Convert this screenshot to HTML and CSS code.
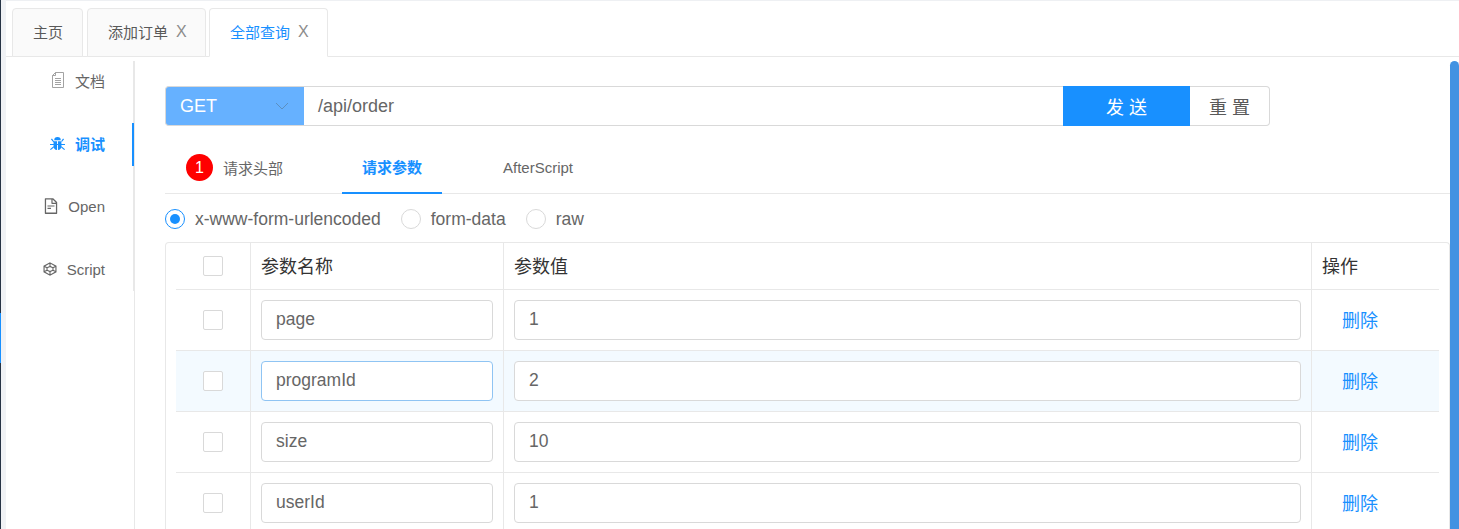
FILE: index.html
```html
<!DOCTYPE html>
<html lang="zh">
<head>
<meta charset="utf-8">
<title>全部查询</title>
<link rel="stylesheet" href="styles.css">
</head>
<body>
<div class="edge"><span class="edge-mark"></span></div>
<div class="app">
  <nav class="page-tabs">
    <div class="page-tab">主页</div>
    <div class="page-tab closable">添加订单<span class="x">X</span></div>
    <div class="page-tab closable current">全部查询<span class="x">X</span></div>
  </nav>
  <div class="workspace">
    <aside class="side">
      <div class="side-item">
        <svg class="ico ico-doc" viewBox="0 0 12 16"><path d="M3.500.5h8v15H.5V3.500zM3.500.5v3h-3M3 6.500h6M3 8.500h6M3 10.500h6M3 12.500h6" fill="none" stroke="currentColor" stroke-width=".9"/></svg>
        <span>文档</span>
      </div>
      <div class="side-item active">
        <svg class="ico ico-bug" viewBox="0 0 16 16"><path d="M4.500 4.500a3.500 3.500 0 0 1 7 0zM3.800 5.500h3.700v9.500C5 15 3.800 13 3.800 11zM8.500 5.500h3.700V11c0 2-1.200 4-3.700 4zM0 8.500h16v1.200H0zM1 3.500l1.100-.8L4.500 6 3.800 7zM15 3.500l-1.100-.8L11.500 6l.7 1zM.8 15l-.8-1L3.800 11v1.600zM15.200 15l.8-1-3.800-3v1.600z" fill="currentColor"/></svg>
        <span>调试</span>
      </div>
      <div class="side-item">
        <svg class="ico ico-file" viewBox="0 0 1024 1024"><path fill="currentColor" d="M854.6 288.6L639.4 73.4c-6-6-14.1-9.4-22.6-9.4H192c-17.7 0-32 14.3-32 32v832c0 17.7 14.3 32 32 32h640c17.7 0 32-14.3 32-32V311.3c0-8.500-3.400-16.700-9.400-22.700zM790.2 326H602V137.8L790.2 326zm1.800 562H232V136h302v216a42 42 0 0 0 42 42h216v494zM504 618H320c-4.400 0-8 3.600-8 8v48c0 4.400 3.600 8 8 8h184c4.400 0 8-3.600 8-8v-48c0-4.400-3.600-8-8-8zM312 490v48c0 4.400 3.600 8 8 8h384c4.400 0 8-3.600 8-8v-48c0-4.400-3.600-8-8-8H320c-4.400 0-8 3.600-8 8z"/></svg>
        <span>Open</span>
      </div>
      <div class="side-item">
        <svg class="ico ico-box" viewBox="0 0 16 16"><path d="M8 1l6.800 3.800v6.400L8 15l-6.800-3.800V4.800zM8 5l3.400 1.600v2.800L8 11 4.600 9.400V6.600zM8 1v4M14.800 4.800l-3.400 1.800M14.800 11.200l-3.400-1.800M8 15v-4M1.200 11.200l3.400-1.800M1.200 4.800l3.400 1.800" fill="none" stroke="currentColor" stroke-width="1.300"/></svg>
        <span>Script</span>
      </div>
    </aside>
    <main class="content">
      <div class="url-bar">
        <div class="method">GET
          <svg class="chev" viewBox="0 0 14 8"><path d="M1 1l6 6 6-6" fill="none" stroke="currentColor"/></svg>
        </div>
        <div class="url">/api/order</div>
        <div class="send">发 送</div>
        <div class="reset">重 置</div>
      </div>
      <div class="req-tabs">
        <div class="req-tab first"><span class="badge">1</span>请求头部</div>
        <div class="req-tab selected">请求参数</div>
        <div class="req-tab">AfterScript</div>
      </div>
      <div class="radios">
        <label class="radio on"><i></i>x-www-form-urlencoded</label>
        <label class="radio"><i></i>form-data</label>
        <label class="radio"><i></i>raw</label>
      </div>
      <div class="table">
        <div class="row head">
          <div class="cell check"><i class="box"></i></div>
          <div class="cell title">参数名称</div>
          <div class="cell title">参数值</div>
          <div class="cell title">操作</div>
        </div>
        <div class="row">
          <div class="cell check"><i class="box"></i></div>
          <div class="cell"><div class="field">page</div></div>
          <div class="cell"><div class="field">1</div></div>
          <div class="cell op">删除</div>
        </div>
        <div class="row hover">
          <div class="cell check"><i class="box"></i></div>
          <div class="cell"><div class="field focus">programId</div></div>
          <div class="cell"><div class="field">2</div></div>
          <div class="cell op">删除</div>
        </div>
        <div class="row">
          <div class="cell check"><i class="box"></i></div>
          <div class="cell"><div class="field">size</div></div>
          <div class="cell"><div class="field">10</div></div>
          <div class="cell op">删除</div>
        </div>
        <div class="row">
          <div class="cell check"><i class="box"></i></div>
          <div class="cell"><div class="field">userId</div></div>
          <div class="cell"><div class="field">1</div></div>
          <div class="cell op">删除</div>
        </div>
      </div>
    </main>
    <div class="scrollbar"></div>
  </div>
</div>
</body>
</html>
```
FILE: styles.css
```css
* { box-sizing: border-box; }
html, body { margin: 0; height: 100%; overflow: hidden; }
body {
  display: flex;
  background: #fff;
  color: #595959;
  font-family: "Liberation Sans", "Noto Sans CJK SC", sans-serif;
  font-size: 15px;
}
.edge {
  position: relative;
  width: 6px;
  flex: none;
  background: #f0f2f5;
  border-left: 1px solid #263445;
}
.edge-mark {
  position: absolute;
  left: -1px;
  top: 313px;
  width: 1px;
  height: 50px;
  background: #1890ff;
}
.app { flex: 1; display: flex; flex-direction: column; min-width: 0; }

.page-tabs {
  height: 57px;
  flex: none;
  display: flex;
  gap: 4px;
  padding: 7px 0 0 6px;
  border-top: 1px solid #eef0f3;
  border-bottom: 1px solid #e8e8e8;
}
.page-tab {
  height: 49px;
  padding: 0 19px 2px 20px;
  display: flex;
  align-items: center;
  border: 1px solid #e8e8e8;
  border-radius: 4px 4px 0 0;
  background: #fafafa;
  color: #595959;
}
.page-tab.closable { padding-right: 18px; }
.page-tab.current { margin-left: -1px; background: #fff; color: #1890ff; border-bottom-color: #fff; }
.x {
  width: 11px;
  margin-left: 8px;
  color: #8c8c8c;
  font-size: 16px;
}
.workspace { flex: 1; display: flex; min-height: 0; padding-top: 4px; }
.side {
  width: 129px;
  flex: none;
  height: 100%;
  border-right: 1px solid #e8e8e8;
  position: relative;
}
.side::before {
  content: "";
  position: absolute;
  right: -1px;
  top: 0;
  width: 2px;
  height: 230px;
  background: #e8e8e8;
}
.side-item {
  position: relative;
  height: 42px;
  margin-bottom: 21px;
  display: flex;
  align-items: center;
  justify-content: flex-end;
  gap: 10px;
  padding: 0 29px 2px 0;
  color: #666;
}
.side-item.active { color: #1890ff; font-weight: 700; }
.side-item.active::after {
  content: "";
  position: absolute;
  right: 0;
  top: 0;
  width: 2px;
  height: 43px;
  background: #1890ff;
}
.side-item:first-child { margin-top: -1px; }
.ico { flex: none; }
.ico-doc { width: 12px; height: 16px; margin-right: 1px; color: #999; }
.ico-bug { width: 15px; height: 15px; }
.ico-file { width: 18px; height: 18px; margin-right: -2px; }
.ico-box { width: 14px; height: 14px; }

.content { width: 1315px; flex: none; padding: 25px 0 0 30px; }
.url-bar { display: flex; width: 1105px; height: 40px; }
.method {
  width: 139px;
  display: flex;
  align-items: center;
  justify-content: space-between;
  padding: 0 15px 0 14px;
  background: #66b1ff;
  border: 1px solid #d9d9d9;
  border-right: 0;
  color: #fff;
  font-size: 18px;
  border-radius: 4px 0 0 4px;
}
.chev { width: 14px; height: 8px; color: #5b8fc0; }
.url {
  flex: 1;
  display: flex;
  align-items: center;
  padding: 0 14px;
  border: 1px solid #d9d9d9;
  border-left: 0;
  border-right: 0;
  font-size: 18px;
  color: #666;
}
.send, .reset { display: flex; align-items: center; justify-content: center; font-size: 18px; }
.send { width: 127px; background: #1890ff; color: #fff; }
.reset {
  width: 80px;
  border: 1px solid #d9d9d9;
  border-left: 0;
  border-radius: 0 4px 4px 0;
  color: #595959;
}

.req-tabs {
  height: 48px;
  margin-top: 20px;
  display: flex;
  border-bottom: 1px solid #e8e8e8;
}
.req-tab {
  width: 100px;
  margin-right: 46px;
  padding-bottom: 5px;
  display: flex;
  align-items: center;
  justify-content: center;
  color: #666;
  margin-bottom: -1px;
}
.req-tab.first { width: 157px; margin-right: 20px; justify-content: flex-start; padding-left: 21px; }
.req-tab.selected { color: #1890ff; font-weight: 700; border-bottom: 2px solid #1890ff; }
.badge {
  width: 27px;
  height: 27px;
  margin-right: 10px;
  border-radius: 50%;
  background: #f00;
  color: #fff;
  display: flex;
  align-items: center;
  justify-content: center;
  font-size: 16px;
}

.radios { height: 48px; display: flex; align-items: center; gap: 20px; padding-top: 2px; font-size: 17.500px; color: #666; }
.radio { display: flex; align-items: center; gap: 10px; }
.radio i {
  width: 20px;
  height: 20px;
  border: 1px solid #d9d9d9;
  border-radius: 50%;
  background: #fff;
  position: relative;
}
.radio.on i { border-color: #1890ff; }
.radio.on i::after {
  content: "";
  position: absolute;
  left: 4px;
  top: 4px;
  width: 10px;
  height: 10px;
  border-radius: 50%;
  background: #1890ff;
}

.table {
  width: 1285px;
  height: 287px;
  overflow: hidden;
  border: 1px solid #e8e8e8;
  border-bottom: 0;
  border-radius: 4px 4px 0 0;
  padding: 0 10px;
}
.row {
  display: grid;
  grid-template-columns: 75px 253px 808px 127px;
  height: 61px;
  border-bottom: 1px solid #e8e8e8;
}
.row.head { height: 47px; }
.row.hover { background: #f3faff; }
.cell {
  display: flex;
  align-items: center;
  padding: 0 10px;
  border-right: 1px solid #e8e8e8;
}
.cell:last-child { border-right: 0; }
.check { justify-content: center; padding: 0 1px 0 0; }
.box {
  width: 20px;
  height: 20px;
  border: 1px solid #d9d9d9;
  border-radius: 2px;
  background: #fff;
}
.title { color: #333; font-size: 18px; padding-bottom: 3px; }
.field {
  width: 100%;
  height: 40px;
  display: flex;
  align-items: center;
  padding: 0 14px 2px;
  border: 1px solid #d9d9d9;
  border-radius: 4px;
  background: #fff;
  font-size: 17.500px;
  color: #666;
}
.field.focus { border-color: #8fc4f3; }
.op { color: #1890ff; font-size: 18px; padding: 0 0 3px 30px; }

.scrollbar {
  width: 9px;
  flex: none;
  background: #4292e2;
  border-radius: 5px 5px 0 0;
}
```
